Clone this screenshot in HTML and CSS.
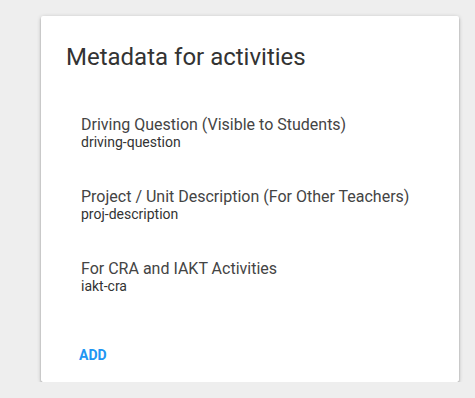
FILE: index.html
```html
<!DOCTYPE html>
<html>
<head>
<meta charset="utf-8">
<link rel="stylesheet" href="styles.css">
</head>
<body>
<div class="page">
  <div class="card">
    <h2 class="card-title">Metadata for activities</h2>
    <ul class="list">
      <li class="item">
        <div class="primary">Driving Question (Visible to Students)</div>
        <div class="secondary">driving-question</div>
      </li>
      <li class="item">
        <div class="primary">Project / Unit Description (For Other Teachers)</div>
        <div class="secondary">proj-description</div>
      </li>
      <li class="item">
        <div class="primary">For CRA and IAKT Activities</div>
        <div class="secondary">iakt-cra</div>
      </li>
    </ul>
    <div class="actions">
      <button class="btn">ADD</button>
    </div>
  </div>
</div>
</body>
</html>
```

FILE: styles.css
```css
html, body {
  margin: 0;
  padding: 0;
  background: #eeeeee;
  font-family: Roboto, "Noto Sans", Arial, sans-serif;
}
.page {
  padding: 16px 16px 0 41px;
}
.card {
  width: 418px;
  height: 366px;
  box-sizing: border-box;
  background: #ffffff;
  box-shadow: 0 1px 4px rgba(0,0,0,0.22), 0 2px 2px rgba(0,0,0,0.28);
  border-radius: 2px;
  padding: 25px 0 0 0;
  display: flex;
  flex-direction: column;
}
.card-title {
  margin: 0 0 0 25px;
  font-size: 24px;
  line-height: 32px;
  font-weight: 400;
  color: #333333;
}
.list {
  list-style: none;
  margin: 43px 0 0 40px;
  padding: 0;
  display: flex;
  flex-direction: column;
  gap: 38px;
}
.primary {
  font-size: 16px;
  line-height: 18px;
  color: #444444;
}
.secondary {
  font-size: 14px;
  line-height: 16px;
  color: #333333;
}
.actions {
  margin-top: auto;
  padding: 0 0 9px 30px;
}
.btn {
  border: none;
  background: transparent;
  font-family: Roboto, "Noto Sans", Arial, sans-serif;
  font-size: 14px;
  font-weight: 700;
  line-height: 36px;
  height: 36px;
  padding: 0 8px;
  color: #2196f3;
  letter-spacing: 0;
}
```
